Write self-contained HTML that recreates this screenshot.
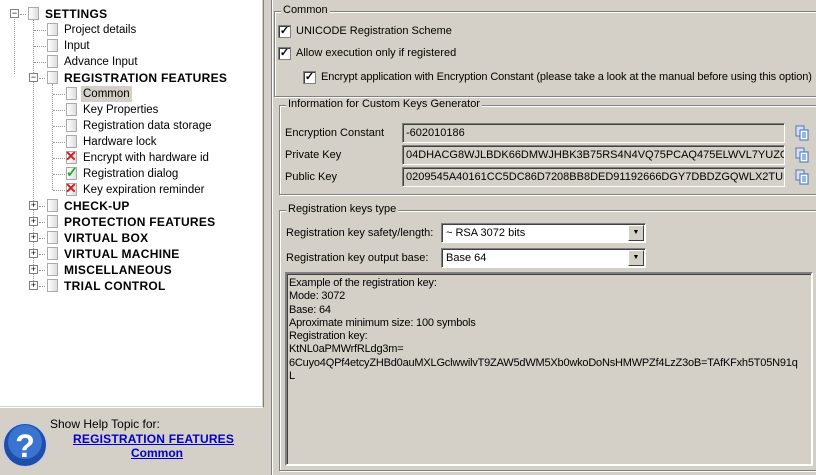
<!DOCTYPE html>
<html><head><style>
*{margin:0;padding:0;box-sizing:border-box}
body{width:816px;height:475px;background:#d4d0c8;font-family:"Liberation Sans",Arial,sans-serif;font-size:11px;color:#000;position:relative;overflow:hidden}
.a{position:absolute;white-space:nowrap}
#tree{position:absolute;left:0;top:0;width:264px;height:408px;background:#fff;border-right:1px solid #808080;border-bottom:1px solid #fff;box-shadow:inset -1px -1px 0 #d4d0c8}
.r{position:absolute;height:16px;line-height:16px;white-space:nowrap;font-size:11.5px}
.b{font-weight:bold;font-size:12px;letter-spacing:.3px}
.pm{position:absolute;width:9px;height:9px;border:1px solid #808080;background:#fff;font-size:9px;line-height:7px;text-align:center;color:#000}
.ic{position:absolute;width:11px;height:13px;border:1px solid #aaa;background:linear-gradient(90deg,#fff,#ddd)}
.dh{position:absolute;border-top:1px dotted #999;height:0}
.dv{position:absolute;border-left:1px dotted #999;width:0}
.grp{position:absolute;border:1px solid #808080;box-shadow:1px 1px 0 #fff inset,1px 1px 0 #fff}
.gl{position:absolute;top:-8px;left:6px;background:#d4d0c8;padding:0 2px}
.cb{position:absolute;width:13px;height:13px;background:#fff;border:1px solid #808080;box-shadow:inset 1px 1px 0 #404040;font-size:11px;line-height:11px;text-align:center;font-weight:bold}
.ed{position:absolute;height:20px;border:1px solid #808080;border-right-color:#fff;border-bottom-color:#fff;box-shadow:inset 1px 1px 0 #404040;background:#d4d0c8;line-height:18px;padding-left:3px;overflow:hidden}
.cmb{position:absolute;height:20px;width:205px;background:#fff;border:1px solid #808080;border-right-color:#fff;border-bottom-color:#fff;box-shadow:inset 1px 1px 0 #404040;line-height:18px;padding-left:4px}
.dd{position:absolute;right:1px;top:1px;width:16px;height:16px;background:#d4d0c8;border:1px solid;border-color:#fff #404040 #404040 #fff;font-size:7px;line-height:14px;text-align:center}
.cp{position:absolute;width:14px;height:16px}
</style></head><body>
<div id="tree">
<div class="dv" style="left:14px;top:19px;height:55px"></div>
<div class="dv" style="left:33px;top:19px;height:268px"></div>
<div class="dv" style="left:52px;top:84px;height:106px"></div>
<div class="pm" style="left:10px;top:9px">−</div>
<div class="dh" style="left:20px;top:14px;width:6px"></div>
<div class="ic" style="left:28px;top:7px"></div>
<div class="r b" style="left:45px;top:6px">SETTINGS</div>
<div class="dh" style="left:34px;top:30px;width:12px"></div><div class="ic" style="left:47px;top:23px"></div><div class="r" style="left:64px;top:22px">Project details</div>
<div class="dh" style="left:34px;top:46px;width:12px"></div><div class="ic" style="left:47px;top:39px"></div><div class="r" style="left:64px;top:38px">Input</div>
<div class="dh" style="left:34px;top:62px;width:12px"></div><div class="ic" style="left:47px;top:55px"></div><div class="r" style="left:64px;top:54px">Advance Input</div>
<div class="pm" style="left:29px;top:73px">−</div><div class="dh" style="left:39px;top:78px;width:6px"></div><div class="ic" style="left:47px;top:71px"></div><div class="r b" style="left:64px;top:70px">REGISTRATION FEATURES</div>
<div class="dh" style="left:53px;top:94px;width:12px"></div><div class="ic" style="left:66px;top:87px"></div><div class="r" style="left:81px;top:86px;background:#d4d0c8;padding:0 2px">Common</div>
<div class="dh" style="left:53px;top:110px;width:12px"></div><div class="ic" style="left:66px;top:103px"></div><div class="r" style="left:83px;top:102px">Key Properties</div>
<div class="dh" style="left:53px;top:126px;width:12px"></div><div class="ic" style="left:66px;top:119px"></div><div class="r" style="left:83px;top:118px">Registration data storage</div>
<div class="dh" style="left:53px;top:142px;width:12px"></div><div class="ic" style="left:66px;top:135px"></div><div class="r" style="left:83px;top:134px">Hardware lock</div>
<div class="dh" style="left:53px;top:158px;width:12px"></div><div class="ic" style="left:66px;top:151px"></div><div class="a" style="left:65px;top:148px;color:#c22;font-size:14px;font-weight:bold">✕</div><div class="r" style="left:83px;top:150px">Encrypt with hardware id</div>
<div class="dh" style="left:53px;top:174px;width:12px"></div><div class="ic" style="left:66px;top:167px"></div><div class="a" style="left:66px;top:164px;color:#2a2;font-size:14px;font-weight:bold">✓</div><div class="r" style="left:83px;top:166px">Registration dialog</div>
<div class="dh" style="left:53px;top:190px;width:12px"></div><div class="ic" style="left:66px;top:183px"></div><div class="a" style="left:65px;top:180px;color:#c22;font-size:14px;font-weight:bold">✕</div><div class="r" style="left:83px;top:182px">Key expiration reminder</div>
<div class="pm" style="left:29px;top:201px">+</div><div class="dh" style="left:39px;top:206px;width:6px"></div><div class="ic" style="left:47px;top:199px"></div><div class="r b" style="left:64px;top:198px">CHECK-UP</div>
<div class="pm" style="left:29px;top:217px">+</div><div class="dh" style="left:39px;top:222px;width:6px"></div><div class="ic" style="left:47px;top:215px"></div><div class="r b" style="left:64px;top:214px">PROTECTION FEATURES</div>
<div class="pm" style="left:29px;top:233px">+</div><div class="dh" style="left:39px;top:238px;width:6px"></div><div class="ic" style="left:47px;top:231px"></div><div class="r b" style="left:64px;top:230px">VIRTUAL BOX</div>
<div class="pm" style="left:29px;top:249px">+</div><div class="dh" style="left:39px;top:254px;width:6px"></div><div class="ic" style="left:47px;top:247px"></div><div class="r b" style="left:64px;top:246px">VIRTUAL MACHINE</div>
<div class="pm" style="left:29px;top:265px">+</div><div class="dh" style="left:39px;top:270px;width:6px"></div><div class="ic" style="left:47px;top:263px"></div><div class="r b" style="left:64px;top:262px">MISCELLANEOUS</div>
<div class="pm" style="left:29px;top:281px">+</div><div class="dh" style="left:39px;top:286px;width:6px"></div><div class="ic" style="left:47px;top:279px"></div><div class="r b" style="left:64px;top:278px">TRIAL CONTROL</div>
</div>
<svg class="a" style="left:2px;top:420px" width="48" height="50"><circle cx="23" cy="25" r="22" fill="#1e4fa8" stroke="#ccd" stroke-width="2"/><circle cx="23" cy="22" r="17" fill="#3a74d0"/><text x="23" y="37" text-anchor="middle" font-family="Liberation Sans" font-weight="bold" font-size="32" fill="#fff">?</text></svg>
<div class="a" style="left:50px;top:417px;font-size:12px">Show Help Topic for:</div>
<div class="a" style="left:73px;top:432px;font-size:12px;font-weight:bold;color:#00c;text-decoration:underline;letter-spacing:.2px">REGISTRATION FEATURES</div>
<div class="a" style="left:131px;top:446px;font-size:12px;font-weight:bold;color:#00c;text-decoration:underline">Common</div>
<div class="a" style="left:271px;top:0;width:1px;height:475px;background:#808080"></div>
<div class="a" style="left:272px;top:0;width:1px;height:475px;background:#fff"></div>

<div class="grp" style="left:274px;top:11px;width:550px;height:86px"><div class="gl">Common</div></div>
<div class="cb" style="left:278px;top:25px">✓</div><div class="a" style="left:296px;top:25px">UNICODE Registration Scheme</div>
<div class="cb" style="left:278px;top:47px">✓</div><div class="a" style="left:296px;top:47px">Allow execution only if registered</div>
<div class="cb" style="left:303px;top:71px">✓</div><div class="a" style="left:321px;top:71px;letter-spacing:-.12px">Encrypt application with Encryption Constant (please take a look at the manual before using this option)</div>

<div class="grp" style="left:279px;top:105px;width:545px;height:90px"><div class="gl">Information for Custom Keys Generator</div></div>
<div class="a" style="left:285px;top:127px">Encryption Constant</div>
<div class="a" style="left:285px;top:149px">Private Key</div>
<div class="a" style="left:285px;top:171px">Public Key</div>
<div class="ed" style="left:402px;top:123px;width:383px">-602010186</div>
<div class="ed" style="left:402px;top:145px;width:383px">04DHACG8WJLBDK66DMWJHBK3B75RS4N4VQ75PCAQ475ELWVL7YUZC7</div>
<div class="ed" style="left:402px;top:167px;width:383px">0209545A40161CC5DC86D7208BB8DED91192666DGY7DBDZGQWLX2TUM</div>
<svg class="cp" style="left:795px;top:125px" viewBox="0 0 14 16"><rect x="1" y="1" width="8" height="10" fill="#dde" stroke="#57a"/><rect x="5" y="5" width="8" height="10" fill="#fff" stroke="#2a6fd0"/><path d="M7 8h4M7 10h4M7 12h4" stroke="#2a6fd0"/></svg>
<svg class="cp" style="left:795px;top:147px" viewBox="0 0 14 16"><rect x="1" y="1" width="8" height="10" fill="#dde" stroke="#57a"/><rect x="5" y="5" width="8" height="10" fill="#fff" stroke="#2a6fd0"/><path d="M7 8h4M7 10h4M7 12h4" stroke="#2a6fd0"/></svg>
<svg class="cp" style="left:795px;top:169px" viewBox="0 0 14 16"><rect x="1" y="1" width="8" height="10" fill="#dde" stroke="#57a"/><rect x="5" y="5" width="8" height="10" fill="#fff" stroke="#2a6fd0"/><path d="M7 8h4M7 10h4M7 12h4" stroke="#2a6fd0"/></svg>

<div class="grp" style="left:279px;top:210px;width:545px;height:261px"><div class="gl">Registration keys type</div></div>
<div class="a" style="left:286px;top:227px">Registration key safety/length:</div>
<div class="a" style="left:286px;top:252px">Registration key output base:</div>
<div class="cmb" style="left:441px;top:223px">~ RSA 3072 bits<div class="dd">▼</div></div>
<div class="cmb" style="left:441px;top:248px">Base 64<div class="dd">▼</div></div>
<div class="a" style="left:285px;top:272px;width:528px;height:194px;border:2px solid;border-color:#808080 #fff #fff #808080;box-shadow:inset 1px 1px 0 #404040;padding:3px 0 0 2px;line-height:13.3px;white-space:normal;word-break:break-all;letter-spacing:-.2px">Example of the registration key:<br>Mode: 3072<br>Base: 64<br>Aproximate minimum size: 100 symbols<br>Registration key:<br>KtNL0aPMWrfRLdg3m=<br>6Cuyo4QPf4etcyZHBd0auMXLGclwwilvT9ZAW5dWM5Xb0wkoDoNsHMWPZf4LzZ3oB=TAfKFxh5T05N91q<br>L</div>
</body></html>
